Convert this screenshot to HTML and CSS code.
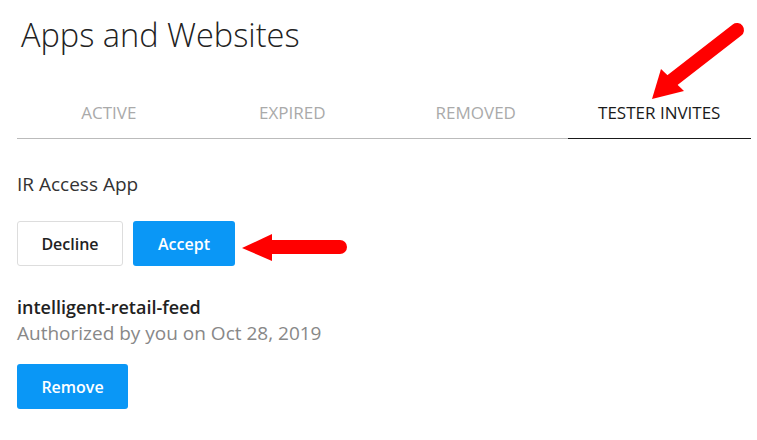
FILE: index.html
```html
<!DOCTYPE html>
<html lang="en">
<head>
    <meta charset="UTF-8">
    <meta name="viewport" content="width=device-width, initial-scale=1.0">
    <title>Apps and Websites</title>
    <link rel="stylesheet" href="styles.css">
</head>
<body>
    <div class="page">
        <h1 class="title">Apps and Websites</h1>

        <div class="tabs">
            <div class="tab">ACTIVE</div>
            <div class="tab">EXPIRED</div>
            <div class="tab">REMOVED</div>
            <div class="tab active">TESTER INVITES</div>
        </div>

        <div class="invite">
            <div class="app-name">IR Access App</div>
            <div class="actions">
                <button class="btn btn-outline">Decline</button>
                <button class="btn btn-primary">Accept</button>
            </div>
        </div>

        <div class="authorized">
            <div class="auth-name">intelligent-retail-feed</div>
            <div class="auth-meta">Authorized by you on Oct 28, 2019</div>
            <button class="btn btn-primary btn-remove">Remove</button>
        </div>

        <!-- annotation arrows drawn over the screenshot -->
        <svg class="arrow arrow-tab" width="117" height="90" viewBox="0 0 117 90">
            <line x1="97" y1="15" x2="30" y2="67" stroke="#f00" stroke-width="14" stroke-linecap="round"/>
            <polygon points="12,84 21,54 44,76" fill="#f00"/>
        </svg>
        <svg class="arrow arrow-accept" width="112" height="34" viewBox="0 0 112 34">
            <line x1="32" y1="17" x2="102" y2="17" stroke="#f00" stroke-width="14" stroke-linecap="round"/>
            <polygon points="4,18 34,4 34,31" fill="#f00"/>
        </svg>
    </div>
</body>
</html>
```

FILE: styles.css
```css
body {
    margin: 0;
    background: #fff;
    font-family: "Open Sans", "Noto Sans", sans-serif;
    color: #222;
}

.page {
    position: relative;
    padding: 0 6px 0 17px;
}

.title {
    margin: 0;
    padding: 13px 0 0 4px;
    font-size: 32.5px;
    font-weight: 300;
    color: #222;
    line-height: 44px;
}

.tabs {
    display: flex;
    margin-top: 45px;
    border-bottom: 1px solid #bbb;
}

.tab {
    flex: 1;
    text-align: center;
    font-size: 17px;
    color: #aaa;
    padding: 0 0 14px;
    line-height: 22px;
}

.tab.active {
    color: #1a1a1a;
    border-bottom: 1px solid #1a1a1a;
    margin-bottom: -1px;
}

.invite {
    padding-top: 32px;
}

.app-name {
    font-size: 19px;
    color: #333;
    line-height: 26px;
}

.actions {
    display: flex;
    gap: 10px;
    margin-top: 24px;
}

.btn {
    font-family: inherit;
    font-size: 16px;
    font-weight: 600;
    height: 45px;
    border-radius: 3px;
    cursor: pointer;
}

.btn-outline {
    width: 106px;
    background: #fff;
    color: #222;
    border: 1px solid #ddd;
}

.btn-primary {
    width: 102px;
    background: #0a97f6;
    color: #fff;
    border: none;
}

.authorized {
    margin-top: 28px;
}

.auth-name {
    font-size: 18px;
    font-weight: 600;
    color: #222;
    line-height: 26px;
}

.auth-meta {
    font-size: 19px;
    color: #888;
    line-height: 26px;
}

.btn-remove {
    width: 111px;
    margin-top: 18px;
}

.arrow {
    position: absolute;
}

.arrow-tab {
    left: 640px;
    top: 15px;
}

.arrow-accept {
    left: 238px;
    top: 230px;
}
```
